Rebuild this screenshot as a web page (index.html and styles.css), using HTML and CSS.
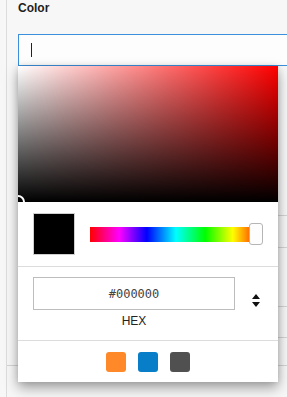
FILE: index.html
```html
<!DOCTYPE html>
<html>
<head>
<meta charset="utf-8">
<link rel="stylesheet" href="styles.css">
</head>
<body>
<div class="page">
  <div class="title">Color</div>
  <div class="field">
    <div class="input"><span class="caret"></span></div>
    <div class="popup">
      <div class="sat"><span class="ring"></span></div>
      <div class="pick-row">
        <div class="current"></div>
        <div class="hue"><span class="handle"></span></div>
      </div>
      <div class="hex-row">
        <div class="hex-col">
          <div class="hex-input">#000000</div>
          <div class="hex-label">HEX</div>
        </div>
        <div class="toggle">
          <svg width="8" height="13" viewBox="0 0 8 13"><path d="M4 0 L8 5 L0 5 Z M0 8 L8 8 L4 13 Z" fill="#111"/></svg>
        </div>
      </div>
      <div class="presets">
        <span class="preset orange"></span>
        <span class="preset blue"></span>
        <span class="preset gray"></span>
      </div>
    </div>
  </div>
  <div class="rows">
    <div class="row r1"></div>
    <div class="row r2"></div>
    <div class="row r3"></div>
    <div class="row r4"></div>
    <div class="row r5"></div>
  </div>
</div>
</body>
</html>
```

FILE: styles.css
```css
html, body {
  margin: 0;
  padding: 0;
  background: #f7f7f7;
  overflow: hidden;
  width: 287px;
  height: 397px;
}
.page {
  margin-left: 6px;
  border-left: 1px solid #dcdcdc;
  padding-left: 11px;
  height: 397px;
  box-sizing: border-box;
  font-family: "Liberation Sans", Arial, sans-serif;
}
.title {
  font-weight: bold;
  font-size: 12px;
  line-height: 14px;
  padding-top: 1px;
  color: #1e1e1e;
}
.field {
  position: relative;
  margin-top: 19px;
  z-index: 2;
}
.input {
  width: 269px;
  height: 32px;
  box-sizing: border-box;
  border: 1px solid #3b8fdb;
  border-right: none;
  background: #fdfdfd;
  display: flex;
  align-items: center;
  padding-left: 12px;
}
.caret {
  width: 1px;
  height: 14px;
  background: #222;
}
.popup {
  position: absolute;
  top: 100%;
  left: 0;
  width: 260px;
  background: #fff;
  box-shadow: 0 6px 12px rgba(0,0,0,0.35), 0 0 6px rgba(0,0,0,0.12);
}
.sat {
  position: relative;
  height: 136px;
  overflow: hidden;
  background:
    linear-gradient(to top, #000, rgba(0,0,0,0)),
    linear-gradient(to right, #fff, rgba(255,255,255,0)),
    #ff0000;
}
.ring {
  position: absolute;
  left: -7px;
  bottom: -7px;
  width: 14px;
  height: 14px;
  box-sizing: border-box;
  border: 2px solid #fff;
  border-radius: 50%;
}
.pick-row {
  display: flex;
  align-items: center;
  gap: 15px;
  padding: 11px 15px 11px 15px;
  border-bottom: 1px solid #dcdcdc;
}
.current {
  width: 42px;
  height: 42px;
  box-sizing: border-box;
  border: 1px solid #cfcfcf;
  background: #000;
  flex: none;
}
.hue {
  position: relative;
  flex: 1;
  height: 15px;
  margin-right: 1px;
  background: linear-gradient(to right, #ff0000 0%, #ff00ff 17%, #0000ff 33%, #00ffff 50%, #00ff00 67%, #ffff00 83%, #ff0000 100%);
}
.handle {
  position: absolute;
  right: -1px;
  top: -4px;
  width: 14px;
  height: 22px;
  box-sizing: border-box;
  background: #fdfdfd;
  border: 1px solid #b5b5b5;
  border-radius: 3px;
}
.hex-row {
  display: flex;
  padding: 10px 0 11px 15px;
  border-bottom: 1px solid #dcdcdc;
}
.hex-col {
  width: 202px;
  display: flex;
  flex-direction: column;
  align-items: center;
}
.hex-input {
  width: 202px;
  height: 33px;
  box-sizing: border-box;
  border: 1px solid #bdbdbd;
  font-family: "DejaVu Sans Mono", "Liberation Mono", monospace;
  font-size: 12px;
  color: #444;
  display: flex;
  align-items: center;
  justify-content: center;
}
.hex-label {
  margin-top: 4px;
  font-size: 12px;
  line-height: 15px;
  color: #222;
}
.toggle {
  flex: 1;
  display: flex;
  align-items: center;
  justify-content: center;
  padding-bottom: 6px;
  padding-right: 1px;
}
.presets {
  display: flex;
  justify-content: center;
  gap: 12px;
  padding: 11px 0 10px;
}
.preset {
  width: 20px;
  height: 20px;
  border-radius: 3px;
}
.orange { background: #ff8829; }
.blue { background: #087ec8; }
.gray { background: #505050; }
.rows {
  position: relative;
  z-index: 1;
}
.row {
  box-sizing: border-box;
  border-bottom: 1px solid #d4d4d4;
}
.r1 { height: 150px; }
.r2 { height: 32px; }
.r3 { height: 59px; }
.r4 { height: 31px; }
.r5 { height: 28px; margin-left: -11px; }
```
